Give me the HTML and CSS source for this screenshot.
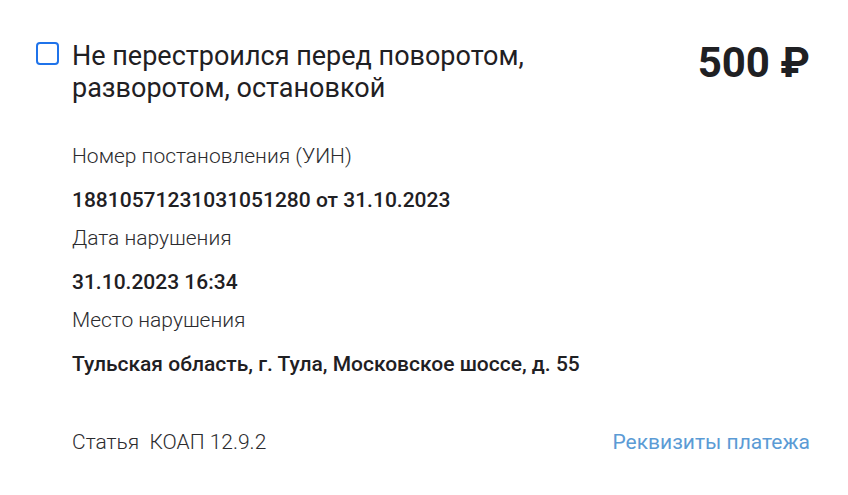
FILE: index.html
```html
<!DOCTYPE html>
<html lang="ru">
<head>
<meta charset="utf-8">
<link rel="stylesheet" href="styles.css">
</head>
<body>
<div class="card">
  <div class="header">
    <span class="checkbox"></span>
    <div class="title">Не перестроился перед поворотом,<br>разворотом, остановкой</div>
    <div class="price">500 ₽</div>
  </div>
  <div class="details">
    <div class="label">Номер постановления (УИН)</div>
    <div class="value">18810571231031051280 от 31.10.2023</div>
    <div class="label">Дата нарушения</div>
    <div class="value">31.10.2023 16:34</div>
    <div class="label">Место нарушения</div>
    <div class="value last">Тульская область, г. Тула, Московское шоссе, д. 55</div>
    <div class="footer">
      <span class="article">Статья&nbsp;&nbsp;КОАП 12.9.2</span>
      <a class="link" href="#">Реквизиты платежа</a>
    </div>
  </div>
</div>
</body>
</html>
```
FILE: styles.css
```css
html, body {
  margin: 0;
  padding: 0;
  background: #ffffff;
}
body {
  font-family: Roboto, "Noto Sans", sans-serif;
  color: #1f2023;
}
.card {
  width: 848px;
  height: 495px;
  box-sizing: border-box;
  padding: 40px 38px 0 36px;
}
.header {
  display: flex;
  align-items: flex-start;
}
.checkbox {
  flex: none;
  box-sizing: border-box;
  width: 23px;
  height: 23px;
  border: 2px solid #1f73ea;
  border-radius: 4px;
  margin-top: 2px;
  margin-right: 13px;
}
.title {
  flex: 1;
  font-size: 27px;
  line-height: 32px;
  font-weight: 400;
  color: #1f2023;
}
.price {
  flex: none;
  font-size: 42px;
  line-height: 46px;
  font-weight: 700;
  color: #1f2023;
}
.details {
  margin-left: 36px;
  margin-top: 40px;
}
.label {
  font-size: 21px;
  line-height: 24px;
  font-weight: 300;
  color: #2b2b2e;
  margin-bottom: 20px;
}
.value {
  font-size: 21px;
  line-height: 24px;
  font-weight: 500;
  color: #1f2023;
  margin-bottom: 14px;
}
.value.last {
  margin-bottom: 54px;
}
.footer {
  display: flex;
  justify-content: space-between;
  font-size: 21px;
  line-height: 24px;
}
.article {
  font-weight: 300;
  color: #2b2b2e;
}
.link {
  color: #5b9bd5;
  text-decoration: none;
  font-weight: 400;
}
```
